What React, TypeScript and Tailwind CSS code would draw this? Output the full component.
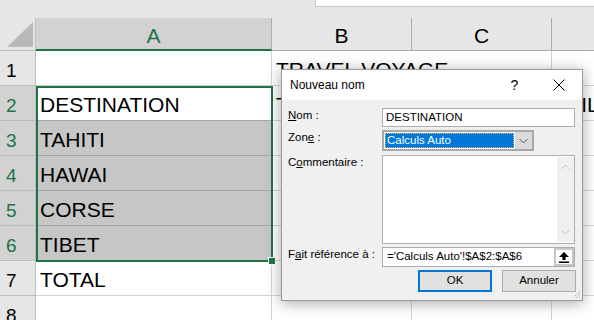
import React from "react";

// --- Types ---
type Row = { n: number; a?: string; b?: string; d?: string };

const GREEN = "#217346";

const ROWS: Row[] = [
  { n: 1, b: "TRAVEL VOYAGE" },
  { n: 2, a: "DESTINATION", b: "TARIF", d: "TAILLE" },
  { n: 3, a: "TAHITI" },
  { n: 4, a: "HAWAI" },
  { n: 5, a: "CORSE" },
  { n: 6, a: "TIBET" },
  { n: 7, a: "TOTAL" },
  { n: 8 },
];

const isSel = (n: number) => n >= 2 && n <= 6;

// --- Sheet ---
const Sheet: React.FC = () => {
  return (
    <div className="relative grid grid-cols-[36px_236px_140px_140px_1fr] grid-rows-[33px_repeat(8,35px)] bg-white font-['Liberation_Sans',Arial,sans-serif] text-black">
      {/* column headers */}
      <div className="bg-[#e6e6e6] border-r border-b border-[#bdbdbd] pl-[7px] pt-[4px]">
        <svg width="26" height="25" viewBox="0 0 26 25">
          <path d="M26 0 L26 25 L0 25 Z" fill="#b8b8b8" />
        </svg>
      </div>
      <div className="bg-[#d2d2d2] border-r border-[#ababab] border-b-2 border-b-[#217346] text-center text-[21px] leading-[24px] pt-[6px] text-[#217346]">
        A
      </div>
      <div className="bg-[#e6e6e6] border-r border-b border-[#ababab] text-center text-[21px] leading-[24px] pt-[6px]">
        B
      </div>
      <div className="bg-[#e6e6e6] border-r border-b border-[#ababab] text-center text-[21px] leading-[24px] pt-[6px]">
        C
      </div>
      <div className="bg-[#e6e6e6] border-b border-[#ababab]" />

      {ROWS.map((r) => {
        const sel = isSel(r.n);
        const grey = r.n >= 3 && r.n <= 6;
        return (
          <React.Fragment key={r.n}>
            <div
              className={`border-r border-b border-[#bdbdbd] pl-[6px] pt-[8px] text-[19px] leading-[24px] ${
                sel ? "bg-[#d2d2d2] text-[#217346]" : "bg-[#e6e6e6] text-black"
              }`}
            >
              {r.n}
            </div>
            <div
              className={`border-r border-b pl-[4px] pt-[7px] text-[21px] leading-[24px] whitespace-nowrap ${
                grey ? "bg-[#c6c6c6] border-[#a6a6a6]" : sel ? "border-b-[#a6a6a6] border-r-[#d4d4d4]" : "border-[#d4d4d4]"
              }`}
            >
              {r.a}
            </div>
            <div
              className={`relative z-10 border-b border-[#d4d4d4] pl-[4px] pt-[7px] text-[21px] leading-[24px] whitespace-nowrap ${
                r.n === 1 ? "" : "border-r"
              }`}
            >
              {r.b}
            </div>
            <div className="border-r border-b border-[#d4d4d4]" />
            <div className="border-b border-[#d4d4d4] pl-[4px] pt-[7px] text-[21px] leading-[24px] whitespace-nowrap overflow-hidden">
              {r.d}
            </div>
          </React.Fragment>
        );
      })}

      {/* selection A2:A6 */}
      <div className="absolute left-[36px] top-[68px] w-[237px] h-[176px] border-2 border-[#217346] z-20" />
      <div className="absolute left-[268px] top-[239px] w-[8px] h-[8px] bg-[#217346] border border-white z-20" />
    </div>
  );
};

// --- Dialog parts ---
const Label: React.FC<{ children: React.ReactNode }> = ({ children }) => (
  <div className="w-[94px] shrink-0 leading-[14px] whitespace-nowrap">{children}</div>
);

const Chevron: React.FC<{ up?: boolean; color: string }> = ({ up, color }) => (
  <svg width="9" height="6" viewBox="0 0 9 6">
    <path
      d={up ? "M0.5 5 L4.5 1 L8.5 5" : "M0.5 1 L4.5 5 L8.5 1"}
      fill="none"
      stroke={color}
      strokeWidth="1"
    />
  </svg>
);

const NewNameDialog: React.FC = () => {
  return (
    <div className="absolute left-[281px] top-[69px] z-30 w-[302px] h-[232px] flex flex-col bg-[#f0f0f0] border border-[#9a9a9a] shadow-[0_2px_14px_rgba(0,0,0,0.35)] font-['Liberation_Sans',Arial,sans-serif] text-[11.5px] text-black">
      {/* title bar */}
      <div className="h-[30px] shrink-0 bg-white flex items-center">
        <span className="pl-[8px] text-[12px]">Nouveau nom</span>
        <span className="ml-auto w-[43px] text-center text-[14px] leading-[16px]">?</span>
        <span className="w-[46px] flex justify-center">
          <svg width="12" height="12" viewBox="0 0 12 12">
            <path d="M0.5 0.5 L11.5 11.5 M11.5 0.5 L0.5 11.5" stroke="#000" strokeWidth="1" />
          </svg>
        </span>
      </div>

      <div className="flex flex-col px-[6px]">
        {/* Nom */}
        <div className="mt-[8px] flex">
          <Label>
            <u>N</u>om :
          </Label>
          <div className="w-[193px] h-[19px] bg-white border border-[#adadad] flex items-center pl-[3px]">
            DESTINATION
          </div>
        </div>

        {/* Zone */}
        <div className="mt-[3px] flex">
          <Label>
            Zon<u>e</u> :
          </Label>
          <div className="w-[152px] h-[21px] border-2 border-[#a9a9a9] flex bg-white">
            <div className="flex-1 p-[1px]">
              <div className="h-full bg-[#0078d7] text-white border border-dotted border-[#e0c070] flex items-center pl-[1px]">
                Calculs Auto
              </div>
            </div>
            <div className="w-[17px] bg-[#dadada] flex items-center justify-center">
              <Chevron color="#555" />
            </div>
          </div>
        </div>

        {/* Commentaire */}
        <div className="mt-[4px] flex">
          <Label>
            C<u>o</u>mmentaire :
          </Label>
          <div className="w-[193px] h-[89px] bg-white border border-[#adadad] flex">
            <div className="flex-1" />
            <div className="w-[17px] my-[1px] bg-[#f0f0f0] flex flex-col items-center justify-between py-[7px]">
              <Chevron up color="#c2c2c2" />
              <Chevron color="#c2c2c2" />
            </div>
          </div>
        </div>

        {/* Fait reference */}
        <div className="mt-[3px] flex">
          <Label>
            F<u>a</u>it référence à :
          </Label>
          <div className="w-[193px] h-[20px] bg-white border border-[#adadad] flex">
            <div className="flex-1 flex items-center pl-[4px] whitespace-nowrap">='Calculs Auto'!$A$2:$A$6</div>
            <div className="w-[20px] border-2 border-[#c6c6c6] bg-white flex items-center justify-center">
              <svg width="10" height="11" viewBox="0 0 10 11">
                <path d="M5 0 L10 5 H6.6 V8 H3.4 V5 H0 Z" fill="#000" />
                <rect x="0" y="9.5" width="10" height="1.5" fill="#000" />
              </svg>
            </div>
          </div>
        </div>

        {/* buttons */}
        <div className="mt-[3px] flex justify-end gap-[10px]">
          <button className="w-[74px] h-[22px] bg-[#e1e1e1] border-2 border-[#0078d7] flex items-center justify-center">
            OK
          </button>
          <button className="w-[74px] h-[22px] bg-[#e1e1e1] border border-[#adadad] flex items-center justify-center">
            Annuler
          </button>
        </div>
      </div>

      {/* resize grip */}
      <svg className="absolute right-[1px] bottom-[1px]" width="10" height="10" viewBox="0 0 10 10">
        <path d="M9 2 L2 9 M9 5 L5 9 M9 8 L8 9" stroke="#9a9a9a" strokeWidth="1" strokeDasharray="1 1" />
      </svg>
    </div>
  );
};

// --- Main App ---
export default function App() {
  return (
    <div className="relative w-[594px] h-[320px] overflow-hidden bg-[#e6e6e6]">
      {/* formula bar strip */}
      <div className="h-[18px] flex items-start">
        <div className="ml-[315px] flex-1 h-[7px] bg-white border-l border-b border-[#c6c6c6]" />
      </div>
      <Sheet />
      <NewNameDialog />
    </div>
  );
}
